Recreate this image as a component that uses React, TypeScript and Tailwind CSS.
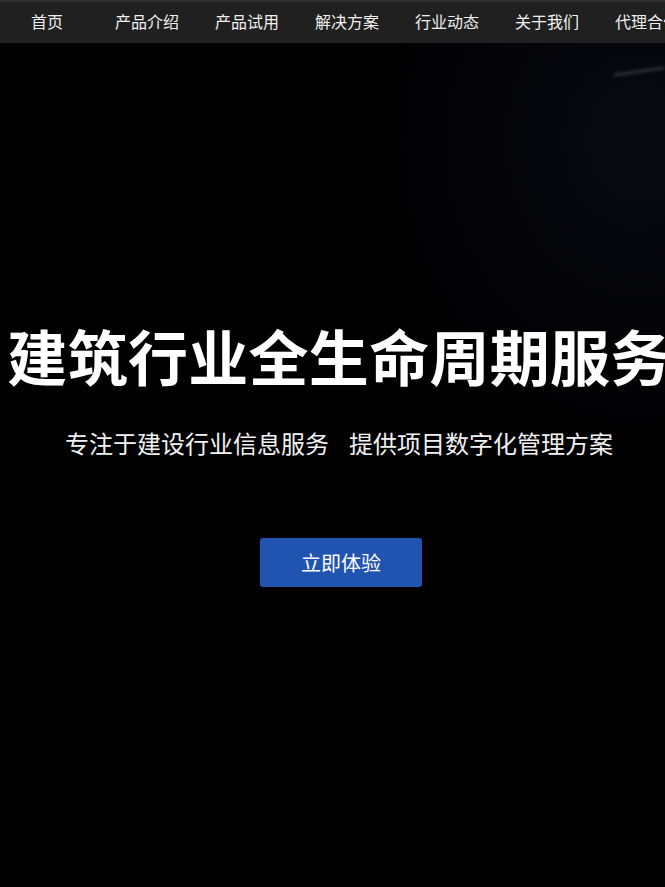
const navItems = ['首页', '产品介绍', '产品试用', '解决方案', '行业动态', '关于我们', '代理合作'];

const cjk = { fontFamily: '"Noto Sans CJK SC", "Noto Sans", sans-serif' };

export default function App() {
  return (
    <div className="relative min-h-screen w-full overflow-hidden bg-[#010102] text-white" style={cjk}>
      {/* faint picture behind the hero */}
      <div className="pointer-events-none absolute inset-0 bg-[radial-gradient(ellipse_at_96%_16%,rgba(30,33,58,0.28),transparent_28%)]" />
      <div className="pointer-events-none absolute right-0 top-[70px] h-[3px] w-[52px] rotate-[-8deg] rounded-full bg-[#2c2e38] blur-[1.5px]" />

      <nav className="relative flex h-[43px] items-center border-t-2 border-[#2e2e2e] bg-[#202020] pb-[4px]">
        <ul className="ml-[-3px] flex whitespace-nowrap">
          {navItems.map((item) => (
            <li key={item} className="w-[100px] shrink-0 text-center text-[16px] leading-[20px] text-[#f0f0f0]">
              {item}
            </li>
          ))}
        </ul>
      </nav>

      <section className="relative flex w-[678px] flex-col items-center">
        <h1 className="mt-[282px] whitespace-nowrap text-[60px] font-bold leading-[60px] tracking-[0.3px]">
          建筑行业全生命周期服务
        </h1>
        <p className="mt-[46px] whitespace-nowrap text-[24px] leading-[24px] text-[#f2f2f2]">
          <span>专注于建设行业信息服务</span>
          <span className="ml-[20px]">提供项目数字化管理方案</span>
        </p>
        <button className="ml-[4px] mt-[83px] flex h-[49px] w-[162px] items-center justify-center rounded-[3px] bg-[#2153b1] text-[20px] text-white">
          立即体验
        </button>
      </section>
    </div>
  );
}
